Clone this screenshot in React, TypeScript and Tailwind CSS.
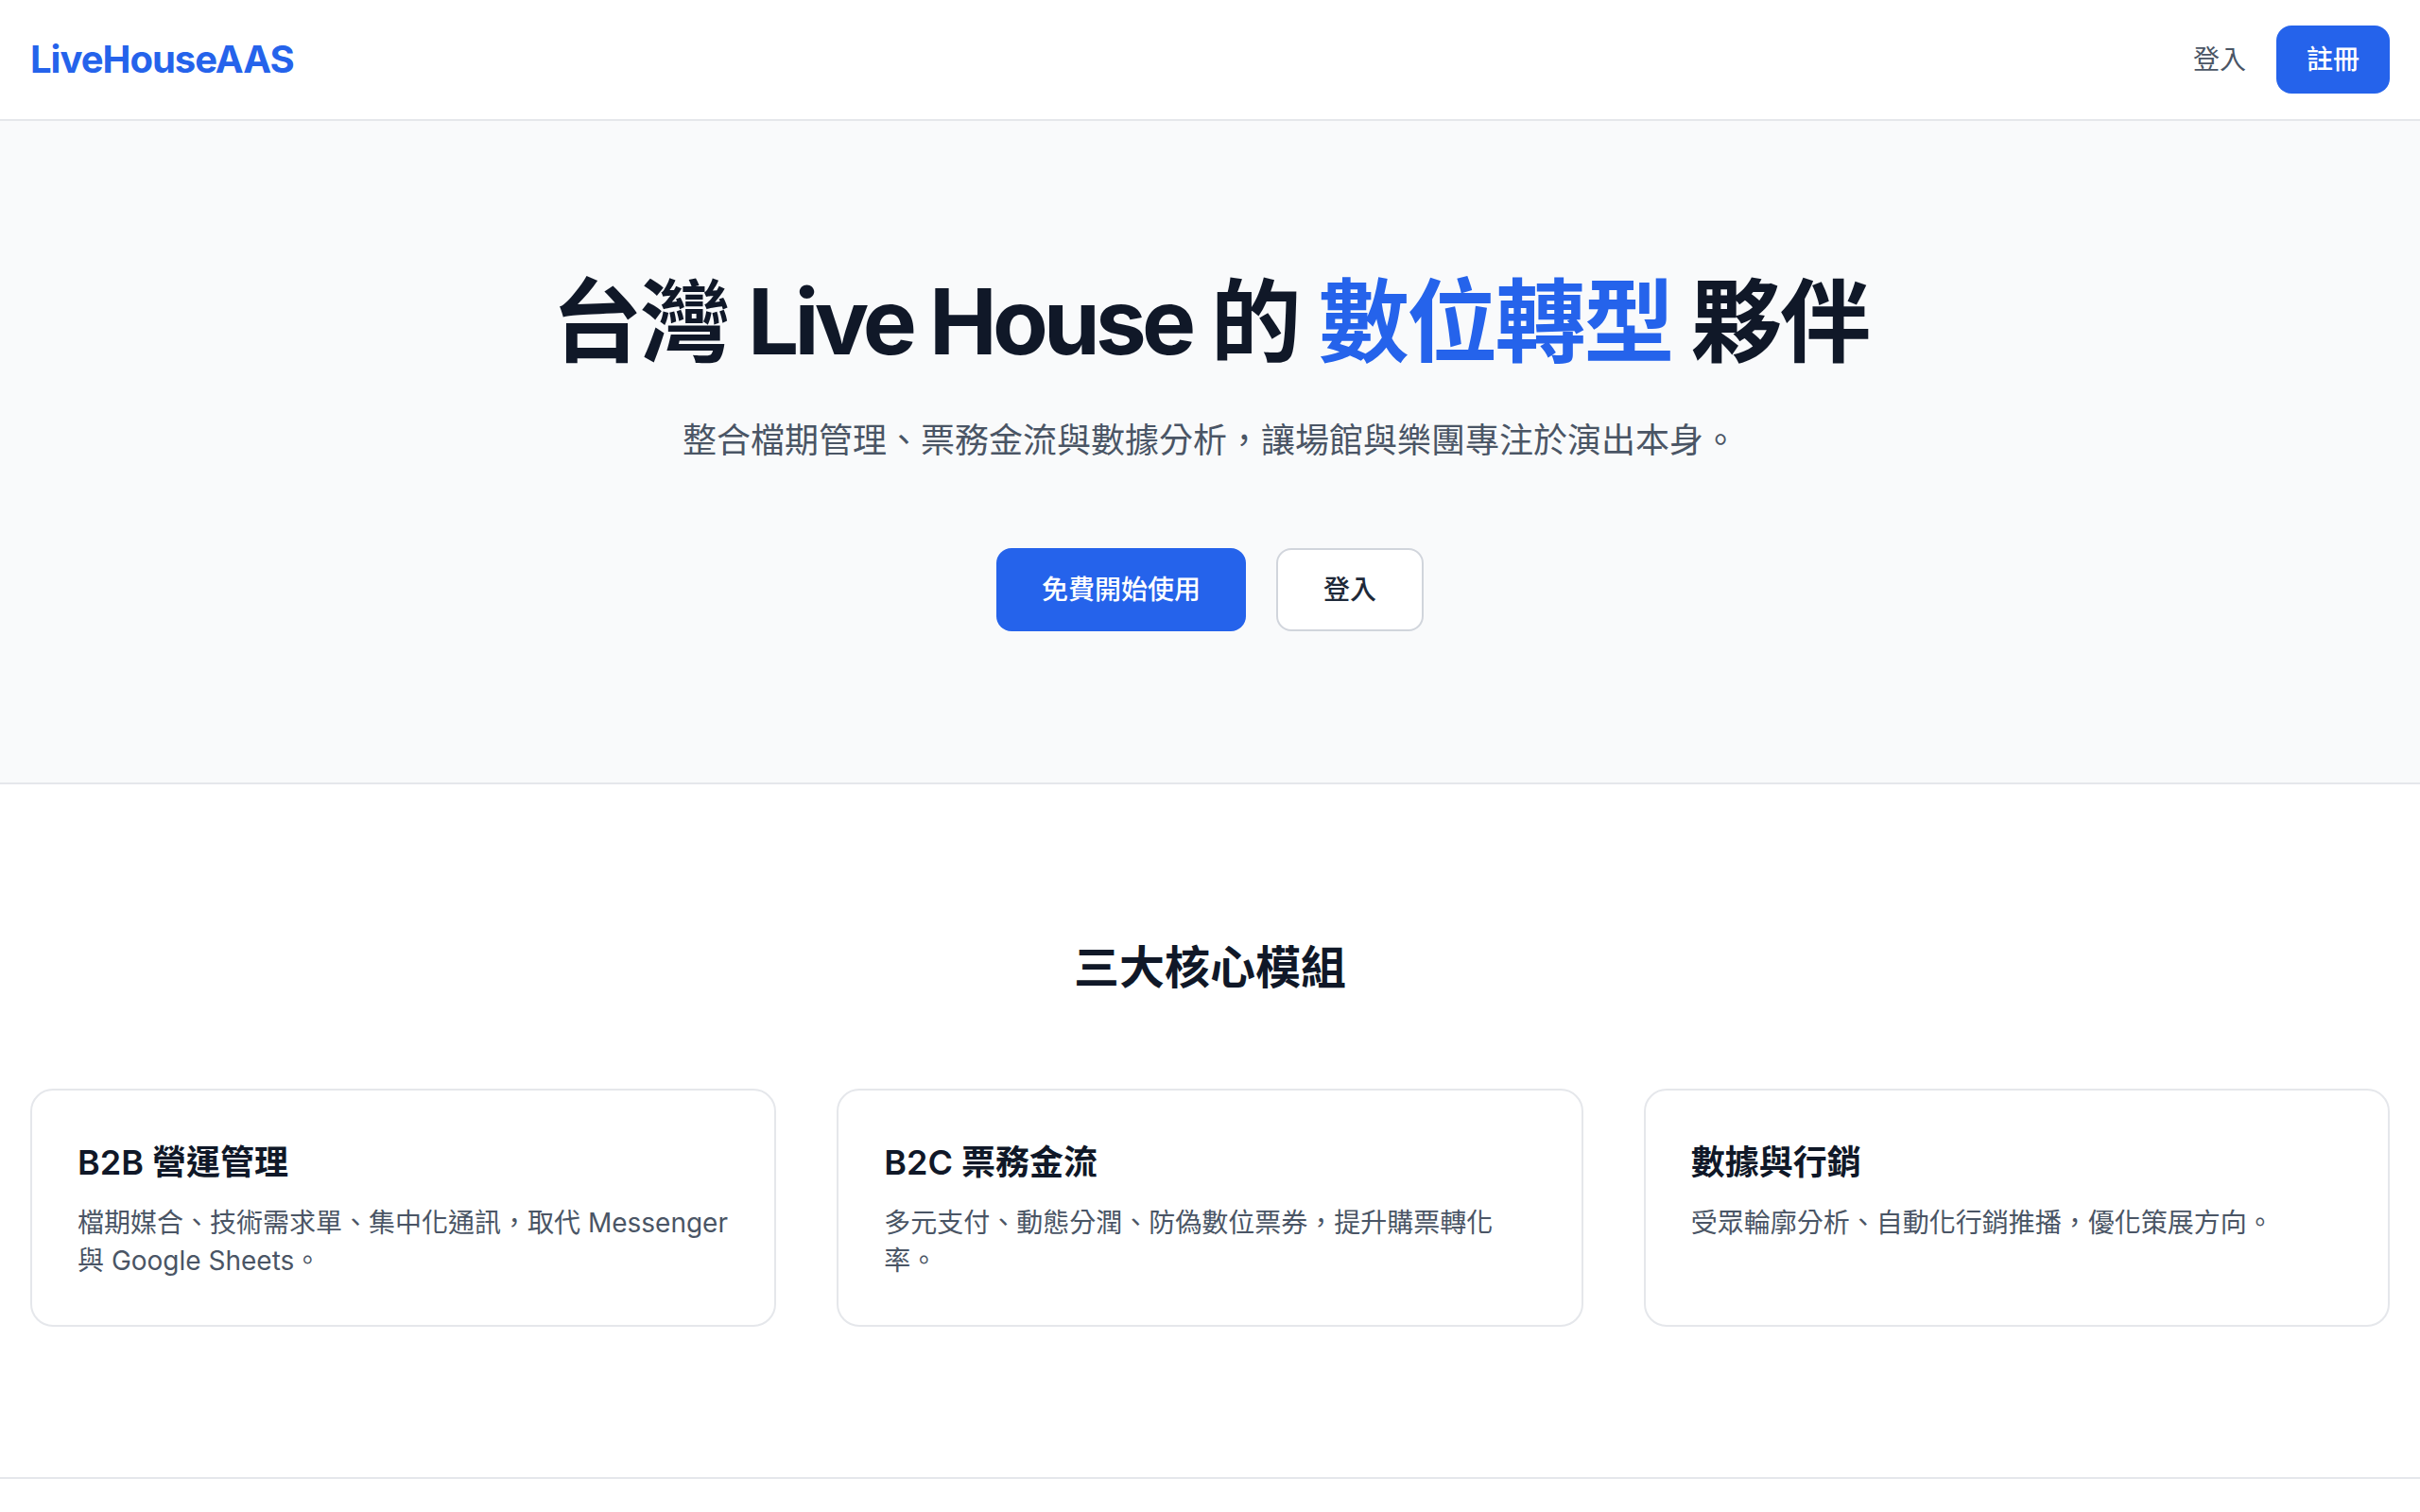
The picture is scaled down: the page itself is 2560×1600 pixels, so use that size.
export default function App() {
  return (
    <div className="min-h-screen bg-white text-gray-900 font-[Inter,'Noto_Sans_CJK_TC',sans-serif]">
      <header className="h-[128px] flex items-center justify-between px-[32px] border-b-2 border-gray-200 bg-white">
        <div className="text-[40px] font-bold tracking-tight text-[#2563eb]">LiveHouseAAS</div>
        <div className="flex items-center gap-[32px]">
          <a className="text-[28px] leading-[40px] text-gray-600">登入</a>
          <a className="text-[28px] leading-[40px] text-white bg-[#2563eb] px-[32px] py-[16px] rounded-[16px] font-medium">註冊</a>
        </div>
      </header>

      <section className="bg-gray-50 border-b-2 border-gray-200 pt-[164px] pb-[160px] text-center">
        <h1 className="text-[96px] leading-[96px] font-bold tracking-tight text-gray-900">
          台灣 <span className="tracking-[-0.05em]">Live House</span> 的 <span className="text-[#2563eb]">數位轉型</span> 夥伴
        </h1>
        <p className="mt-[50px] text-[36px] leading-[56px] text-gray-600">
          整合檔期管理、票務金流與數據分析，讓場館與樂團專注於演出本身。
        </p>
        <div className="mt-[86px] flex justify-center gap-[32px]">
          <a className="h-[88px] flex items-center px-[48px] text-[28px] font-medium text-white bg-[#2563eb] rounded-[16px]">
            免費開始使用
          </a>
          <a className="h-[88px] flex items-center px-[48px] text-[28px] font-medium text-gray-800 bg-white border-2 border-gray-300 rounded-[16px]">
            登入
          </a>
        </div>
      </section>

      <section className="pt-[162px] pb-[159px] px-[32px]">
        <h2 className="text-center text-[48px] leading-[64px] font-bold text-gray-900">三大核心模組</h2>
        <div className="mt-[96px] grid grid-cols-3 gap-[64px]">
          <div className="border-2 border-gray-200 rounded-[24px] p-[48px] bg-white">
            <h3 className="text-[36px] leading-[56px] font-semibold text-gray-900">B2B 營運管理</h3>
            <p className="mt-[16px] text-[28px] leading-[40px] text-gray-600">
              檔期媒合、技術需求單、集中化通訊，取代 Messenger 與 Google Sheets。
            </p>
          </div>
          <div className="border-2 border-gray-200 rounded-[24px] p-[48px] bg-white">
            <h3 className="text-[36px] leading-[56px] font-semibold text-gray-900">B2C 票務金流</h3>
            <p className="mt-[16px] text-[28px] leading-[40px] text-gray-600">
              多元支付、動態分潤、防偽數位票券，提升購票轉化率。
            </p>
          </div>
          <div className="border-2 border-gray-200 rounded-[24px] p-[48px] bg-white">
            <h3 className="text-[36px] leading-[56px] font-semibold text-gray-900">數據與行銷</h3>
            <p className="mt-[16px] text-[28px] leading-[40px] text-gray-600">
              受眾輪廓分析、自動化行銷推播，優化策展方向。
            </p>
          </div>
        </div>
      </section>

      <footer className="border-t-2 border-gray-200 h-[160px]" />
    </div>
  );
}
